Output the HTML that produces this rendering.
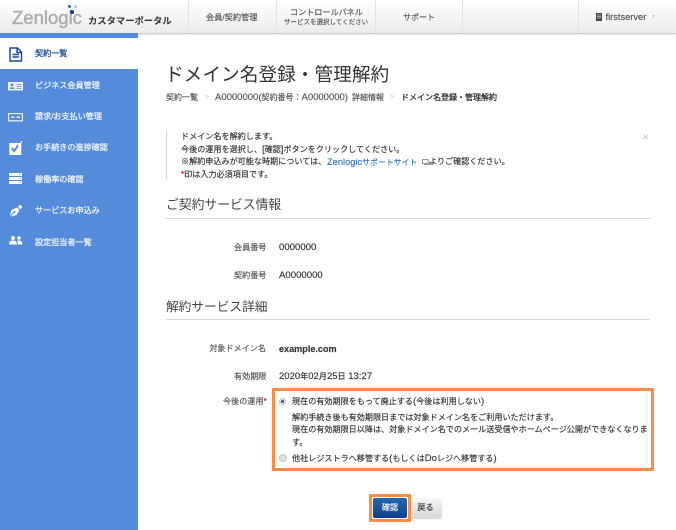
<!DOCTYPE html>
<html><head><meta charset="utf-8"><style>
html,body{margin:0;padding:0;width:676px;height:530px;overflow:hidden;background:#fff}
body{position:relative;font-family:"Liberation Sans","Noto Sans CJK JP",sans-serif;font-size:8.1px;color:#333;-webkit-text-stroke:.15px}
.a{position:absolute;white-space:nowrap;line-height:12px}
.l{font-size:9.5px}
.c{font-size:8.1px}
.hd{position:absolute;left:0;top:0;width:676px;height:33px;background:linear-gradient(#fff,#ececec);border-bottom:1px solid #cfcfcf;box-shadow:0 1px 2px rgba(0,0,0,.12)}
.sep{position:absolute;top:0;width:1px;height:33px;background:#e4e4e4}
.side{position:absolute;left:0;top:33px;width:138px;height:497px;background:#558bdb}
.on{position:absolute;left:0;top:5px;width:138px;height:31px;background:#fff}
.n{color:#eaf1fb;left:35px;font-size:8.1px;-webkit-text-stroke:.3px #eaf1fb}
.ic{position:absolute}
.or{position:absolute;border:3px solid #ff8c42;box-sizing:border-box}
.g{color:#555}
</style></head><body>
<div class="hd"></div>
<div class="a" style="left:12px;top:6px;font-size:18.5px;line-height:24px;color:#adadad;-webkit-text-stroke:.45px #adadad">Zenlogic</div>
<div style="position:absolute;left:67.500px;top:4.500px;width:3.500px;height:3.500px;border-radius:50%;background:#2a63b8"></div>
<div style="position:absolute;left:73.500px;top:4.500px;width:3.500px;height:3.500px;border-radius:50%;background:#a9c5ea"></div>
<div style="position:absolute;left:70.300px;top:10.300px;width:3.500px;height:3.500px;border-radius:50%;background:#123d85"></div>
<div class="a" style="left:88px;top:15px;font-size:9.300px;font-weight:bold;color:#333;-webkit-text-stroke:0">カスタマーポータル</div>
<div class="sep" style="left:188px"></div><div class="sep" style="left:276px"></div><div class="sep" style="left:375px"></div><div class="sep" style="left:462px"></div><div class="sep" style="left:578px"></div>
<div class="a g" style="left:206px;top:12px;font-size:8.200px">会員/契約管理</div>
<div class="a g" style="left:290px;top:7px;font-size:8.100px">コントロールパネル</div>
<div class="a g" style="left:284px;top:17px;font-size:6.500px">サービスを選択してください</div>
<div class="a g" style="left:403px;top:12px;font-size:8px">サポート</div>
<svg class="ic" style="left:596px;top:13px" width="6" height="8"><path fill="#444" d="M0 0h6v8H0z"/><path stroke="#ccc" stroke-width=".7" d="M1 2h4M1 3.500h4M1 5h4"/></svg>
<div class="a g" style="left:605.500px;top:11px;font-size:9.300px">firstserver</div>
<div class="a" style="left:651px;top:11px;color:#ccc;font-size:5px">▼</div>

<div class="side"><div class="on"></div></div>
<svg class="ic" style="left:9px;top:47px" width="14" height="15" fill="none" stroke="#1d4f95" stroke-width="1.500"><path d="M1 1h7.500L12.500 5v9H1zM8 1v4.500h4.500M3.500 7.500h6.500M3.500 10h6.500"/></svg>
<div class="a" style="left:35px;top:48px;color:#1d4f95;-webkit-text-stroke:.3px #1d4f95">契約一覧</div>
<svg class="ic" style="left:8px;top:82px" width="15" height="8.500"><rect width="15" height="8.500" fill="#f0f5fd"/><circle cx="4" cy="3" r="1.500" fill="#558bdb"/><path fill="#558bdb" d="M2 7h4.500V5.500H2zM8.500 2h5v.8h-5zM8.500 4h5v.8h-5zM8.500 6h5v.8h-5z"/></svg>
<div class="a n" style="top:80px">ビジネス会員管理</div>
<svg class="ic" style="left:8px;top:113px" width="15" height="8.500"><rect width="15" height="8.500" fill="#e6eefa"/><rect x="1.200" y="1.200" width="12.600" height="6" fill="#558bdb"/><path fill="#e6eefa" d="M3 3.500h3.500v1.500H3zM8.500 3.500H12v1.500H8.500z"/></svg>
<div class="a n" style="top:111px">請求/お支払い管理</div>
<svg class="ic" style="left:9px;top:141px" width="14" height="14"><path fill="#fff" d="M.3 2h12v12H.3z"/><path fill="none" stroke="#558bdb" stroke-width="2" d="M2.800 7l2.500 3 4-6"/><path fill="none" stroke="#fff" stroke-width="1.300" d="M9.800 5L13 .3"/></svg>
<div class="a n" style="top:142px">お手続きの進捗確認</div>
<svg class="ic" style="left:9px;top:173px" width="13" height="11"><path fill="#fff" d="M0 0h13v3H0zM0 4h13v3H0zM0 8h13v3H0z"/><path fill="#558bdb" d="M10.500 1h1v1h-1zM10.500 5h1v1h-1zM10.500 9h1v1h-1z"/></svg>
<div class="a n" style="top:174px">稼働率の確認</div>
<svg class="ic" style="left:9px;top:204px" width="14" height="13"><path fill="#fff" d="M.5 13L2.500 6 8 3.500 10.500 6 7.500 11z"/><path stroke="#558bdb" fill="none" d="M.5 13L5 8.500"/><circle cx="5.500" cy="8" r="1" fill="#558bdb"/><path fill="#fff" d="M9 3L11 .5 13.500 3 11.300 5.200z"/></svg>
<div class="a n" style="top:205px">サービスお申込み</div>
<svg class="ic" style="left:9px;top:236px" width="13.500" height="8.500"><circle cx="4" cy="2" r="2" fill="#fff"/><circle cx="10" cy="2" r="1.800" fill="#fff"/><path fill="#fff" d="M0 8.500c0-2.700 1.300-4 4-4s4 1.300 4 4zM9 8.500c0-1.700-.4-2.700-1-3.700 2.500-.8 5.500.3 5.500 3.700z"/></svg>
<div class="a n" style="top:237px">設定担当者一覧</div>

<div class="a" style="left:165px;top:63px;font-size:18.700px;line-height:24px;color:#333;-webkit-text-stroke:0">ドメイン名登録・管理解約</div>
<div class="a g" style="left:166px;top:92px;font-size:8px">契約一覧</div>
<div class="a" style="left:205px;top:92px;color:#ccc;font-size:7px">&gt;</div>
<div class="a g" style="left:215px;top:92px;font-size:8px"><span class="l">A0000000(</span>契約番号：<span class="l">A0000000)</span></div>
<div class="a g" style="left:352px;top:92px;font-size:8px">詳細情報</div>
<div class="a" style="left:390px;top:92px;color:#ccc;font-size:7px">&gt;</div>
<div class="a" style="left:401px;top:92px;color:#333;font-size:8px;-webkit-text-stroke:.3px #333">ドメイン名登録・管理解約</div>

<div style="position:absolute;left:166px;top:130px;width:1px;height:50px;background:#d8d8d8"></div>
<div class="a" style="left:181px;top:131px">ドメイン名を解約します。</div>
<div class="a" style="left:181px;top:144px">今後の運用を選択し、<span class="l">[</span>確認<span class="l">]</span>ボタンをクリックしてください。</div>
<div class="a" style="left:181px;top:156px">※解約申込みが可能な時期については、</div>
<div class="a" style="left:327px;top:156px;color:#2a6fb5;-webkit-text-stroke:.12px #2a6fb5"><span class="l" style="font-size:9.300px">Zenlogic</span><span style="font-size:7.900px">サポートサイト</span></div>
<svg class="ic" style="left:422px;top:159px" width="8" height="7" fill="none" stroke="#777" stroke-width=".8"><path d="M.5.500h5.500v4H.5zM2 5.500h5.500v-3"/></svg>
<div class="a" style="left:429px;top:156px">よりご確認ください。</div>
<div class="a" style="left:181px;top:169px"><span style="color:#d00">*</span>印は入力必須項目です。</div>
<div class="a" style="left:642px;top:131px;color:#ccc;font-size:12px;-webkit-text-stroke:0">×</div>

<div class="a" style="left:166px;top:197px;font-size:12.800px;line-height:16px;color:#444;-webkit-text-stroke:0">ご契約サービス情報</div>
<div style="position:absolute;left:166px;top:218px;width:484px;height:1px;background:#d8d8d8"></div>
<div class="a g" style="left:234px;top:242px">会員番号</div>
<div class="a" style="left:279px;top:242px;font-size:9.600px">0000000</div>
<div class="a g" style="left:234px;top:270px">契約番号</div>
<div class="a" style="left:279px;top:270px;font-size:9.600px">A0000000</div>
<div class="a" style="left:166px;top:299px;font-size:12.700px;line-height:16px;color:#444;-webkit-text-stroke:0">解約サービス詳細</div>
<div style="position:absolute;left:166px;top:319px;width:484px;height:1px;background:#d8d8d8"></div>
<div class="a g" style="left:200px;top:343px;width:66px;text-align:right">対象ドメイン名</div>
<div class="a" style="left:279px;top:343px;font-size:9.100px;font-weight:bold">example.com</div>
<div class="a g" style="left:234px;top:371px">有効期限</div>
<div class="a" style="left:279px;top:371px;font-size:9.500px">2020<span class="c">年</span>02<span class="c">月</span>25<span class="c">日</span> 13:27</div>

<div class="or" style="left:272px;top:388px;width:382px;height:83px"></div>
<div class="a g" style="left:223px;top:396px">今後の運用<span style="color:#d00">*</span></div>
<div style="position:absolute;left:279px;top:398px;width:7px;height:7px;border-radius:50%;background:radial-gradient(#1f5aa8 38%,#e8e8e8 48%);border:1px solid #c4c4c4;box-sizing:border-box"></div>
<div class="a" style="left:292px;top:396px">現在の有効期限をもって廃止する<span class="l">(</span>今後は利用しない<span class="l">)</span></div>
<div class="a" style="left:292px;top:412px">解約手続き後も有効期限日までは対象ドメイン名をご利用いただけます。</div>
<div class="a" style="left:292px;top:424px">現在の有効期限日以降は、対象ドメイン名でのメール送受信やホームページ公開ができなくなりま</div>
<div class="a" style="left:292px;top:437px">す。</div>
<div style="position:absolute;left:279px;top:454px;width:8px;height:8px;border-radius:50%;background:#e2e2e2;border:1px solid #c4c4c4;box-sizing:border-box"></div>
<div class="a" style="left:292px;top:453px">他社レジストラへ移管する<span class="l">(</span>もしくは<span class="l">Do</span>レジへ移管する<span class="l">)</span></div>

<div style="position:absolute;left:409px;top:498px;width:33px;height:20px;border-radius:2px;background:linear-gradient(#f6f6f6,#d8d8d8);color:#444;text-align:center;line-height:20px;box-shadow:0 1px 1px rgba(0,0,0,.15);-webkit-text-stroke:.3px #444">戻る</div>
<div class="or" style="left:369px;top:494px;width:42px;height:28px"></div>
<div style="position:absolute;left:373px;top:498px;width:34px;height:20px;border-radius:2px;background:linear-gradient(#2a66b0,#0f3f86);color:#dfe8f5;text-align:center;line-height:20px;-webkit-text-stroke:.3px #dfe8f5">確認</div>
</body></html>
